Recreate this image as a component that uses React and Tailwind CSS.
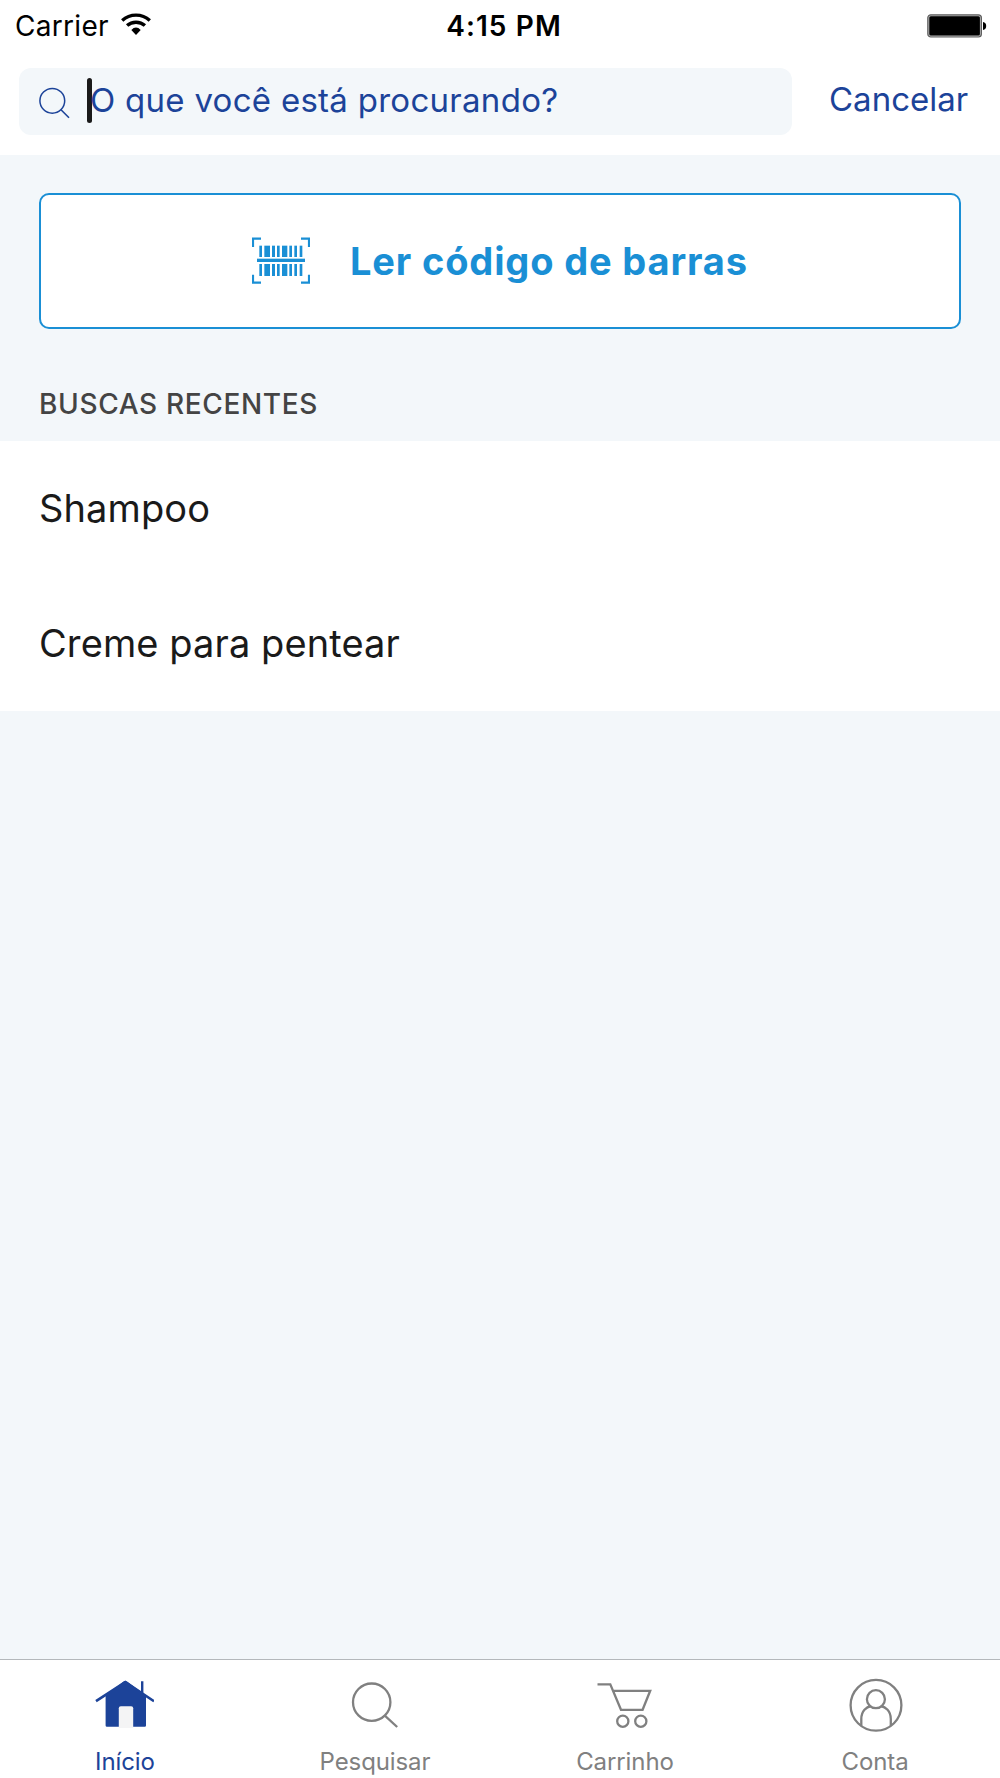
import React, { useState } from "react";

const HomeIcon = () => (
  <svg width="59" height="48" viewBox="0 0 59 48" className="mt-0.5 mr-0.5">
    <path
      d="M1 21.2 L30.3 2.1 L59 21.2"
      fill="none"
      stroke="#1c4399"
      strokeWidth="2.6"
    />
    <path d="M46 1.2h2.4v13l-2.4-1.4z" fill="#1c4399" />
    <path
      d="M11 15.5 L28.6 1.6 Q30.3 .2 32 1.6 L51 15.5 V45.5 Q51 46.8 49.8 46.8 H12 Q10.6 46.8 10.6 45.5 V15.5z"
      fill="#1c4399"
    />
    <path d="M23.8 28.3 q0-2 2-2 h10.4 q2 0 2 2 V48 H23.8z" fill="#f4f4f5" />
  </svg>
);

const SearchIcon = () => (
  <svg
    width="48"
    height="48"
    viewBox="0 0 48 48"
    fill="none"
    stroke="#808080"
    strokeWidth="2.3"
    className="mt-0.5"
  >
    <circle cx="20.7" cy="22.2" r="18.7" />
    <path d="M33.8 35.6 L46.2 47" />
  </svg>
);

const CartIcon = () => (
  <svg
    width="55"
    height="48"
    viewBox="0 0 55 48"
    fill="none"
    stroke="#808080"
    strokeWidth="2.3"
    className="mt-[1.5px] mr-0.5"
  >
    <path d="M0.5 4.3 H13.3 L24 29.8 H45.6 L53.2 10.8 H16.4" />
    <circle cx="25.8" cy="41.2" r="5.6" />
    <circle cx="43.8" cy="41.2" r="5.6" />
  </svg>
);

const AccountIcon = () => (
  <svg
    width="54"
    height="54"
    viewBox="0 0 54 54"
    fill="none"
    stroke="#808080"
    strokeWidth="2.3"
    className="ml-0.5"
  >
    <circle cx="27" cy="27.3" r="25.4" />
    <circle cx="26.9" cy="21.2" r="9" />
    <path d="M12.3 47.8 V41 C12.3 33 17.5 28.8 22 28 M31.8 28 C36.5 28.8 41.8 33 41.8 41 V47.8" />
  </svg>
);

const BarcodeIcon = () => (
  <svg
    width="58"
    height="47"
    viewBox="0 0 174 141"
    fill="#1a8fd5"
    className="-mt-0.5"
  >
    <path
      d="M3 30 V5 H27 M147 5 H171 V30 M3 113 V137 H27 M147 137 H171 V113"
      fill="none"
      stroke="#1a8fd5"
      strokeWidth="6.5"
    />
    {[
      [22, 8],
      [37, 17],
      [60, 9],
      [75, 8],
      [90, 16],
      [112, 8],
      [127, 8],
      [143, 8],
    ].map(([x, w]) => (
      <React.Fragment key={x}>
        <rect x={x} y="26" width={w} height="34" />
        <rect x={x} y="81" width={w} height="36" />
      </React.Fragment>
    ))}
    <rect x="15" y="65" width="144" height="10" />
  </svg>
);

const WifiIcon = () => (
  <svg
    width="30"
    height="23"
    viewBox="0 0 30 23"
    fill="none"
    stroke="#000"
    strokeWidth="3.4"
    className="-mt-[3px]"
  >
    <path d="M1.2 7.4 C9 .3 21 .3 28.8 7.4" />
    <path d="M6.1 12.6 C11 8.1 19 8.1 23.9 12.6" />
    <path
      d="M10.3 17 Q15 12.2 19.7 17 L15 21.9z"
      fill="#000"
      stroke="none"
    />
  </svg>
);

const BatteryIcon = () => (
  <svg width="60" height="24" viewBox="0 0 60 24" className="-mt-px">
    <rect
      x=".8"
      y=".8"
      width="53.6"
      height="22.2"
      rx="3"
      fill="#b5b5b5"
      stroke="#5f5f5f"
      strokeWidth="1.2"
    />
    <rect x="2.3" y="2.2" width="50.6" height="19.4" rx="1.5" fill="#000" />
    <path d="M56 8 Q59.2 8.6 59.2 12 Q59.2 15.4 56 16z" fill="#000" />
  </svg>
);

const tabs = [
  { id: 1, title: "Início", icon: HomeIcon },
  { id: 2, title: "Pesquisar", icon: SearchIcon },
  { id: 3, title: "Carrinho", icon: CartIcon },
  { id: 4, title: "Conta", icon: AccountIcon },
];

const recentSearches = ["Shampoo", "Creme para pentear"];

const App = () => {
  const [active, setActive] = useState(1);

  return (
    <div className="flex flex-col w-[1000px] h-[1778px] bg-[#f3f7fa] font-['Inter',sans-serif] overflow-hidden">
      {/* Status Bar */}
      <div className="grid grid-cols-3 items-center h-[51px] pl-[15px] pr-[13px] bg-white text-[28px] leading-[52px] text-black">
        <div className="flex items-center gap-3">
          <span className="tracking-[0.3px]">Carrier</span>
          <WifiIcon />
        </div>
        <span className="pl-[6px] text-center font-semibold tracking-[1.1px]">
          4:15 PM
        </span>
        <div className="flex justify-end">
          <BatteryIcon />
        </div>
      </div>

      {/* Search Header */}
      <div className="flex h-[104px] pt-[17px] pb-5 pl-[19px] bg-white text-[33px] text-[#1c4399]">
        <div className="flex items-center w-[773px] rounded-xl bg-[#f3f7fa] pl-5">
          <svg
            width="32"
            height="32"
            viewBox="0 0 32 32"
            fill="none"
            stroke="#1c4399"
            strokeWidth="1.5"
            className="mt-0.5"
          >
            <circle cx="13.3" cy="13.8" r="12.4" />
            <path d="M22 22.7 L30 30.8" />
          </svg>
          <span className="w-[5px] h-[45px] ml-4 -mt-[3px] rounded-sm bg-[#1a1a1a]" />
          <span className="-ml-[2px] -mt-px tracking-[0.28px]">
            O que você está procurando?
          </span>
        </div>
        <button className="ml-[37px] pb-[3px]">Cancelar</button>
      </div>

      {/* Barcode Button */}
      <div className="px-[39px] pt-[38px]">
        <button className="flex items-center w-full h-[136px] pl-[211px] rounded-[10px] border-2 border-[#1a8fd5] bg-white text-[#1a8fd5]">
          <BarcodeIcon />
          <span className="ml-10 text-[38px] font-bold tracking-[0.85px]">
            Ler código de barras
          </span>
        </button>
      </div>

      {/* Recent Searches */}
      <h2 className="mt-[54px] h-[58px] pl-[39px] text-[28px] leading-[42px] font-medium tracking-[0.65px] text-[#444]">
        BUSCAS RECENTES
      </h2>
      <ul className="h-[270px] bg-white text-[38px] leading-[135px] tracking-[0.1px] text-[#1a1a1a]">
        {recentSearches.map((item) => (
          <li key={item} className="pl-[39px]">
            {item}
          </li>
        ))}
      </ul>

      {/* Tab Bar */}
      <nav className="grid grid-cols-4 mt-auto h-[119px] border-t border-[#b4b8bb] bg-white">
        {tabs.map((tab) => {
          const Icon = tab.icon;
          return (
            <button
              key={tab.id}
              onClick={() => setActive(tab.id)}
              className={`flex flex-col items-center pt-[18px] ${
                active === tab.id ? "text-[#1c4399]" : "text-[#808080]"
              }`}
            >
              <span className="flex h-[54px]">
                <Icon />
              </span>
              <span className="mt-[14px] text-2xl leading-8 tracking-[-0.1px]">
                {tab.title}
              </span>
            </button>
          );
        })}
      </nav>
    </div>
  );
};

export default App;
